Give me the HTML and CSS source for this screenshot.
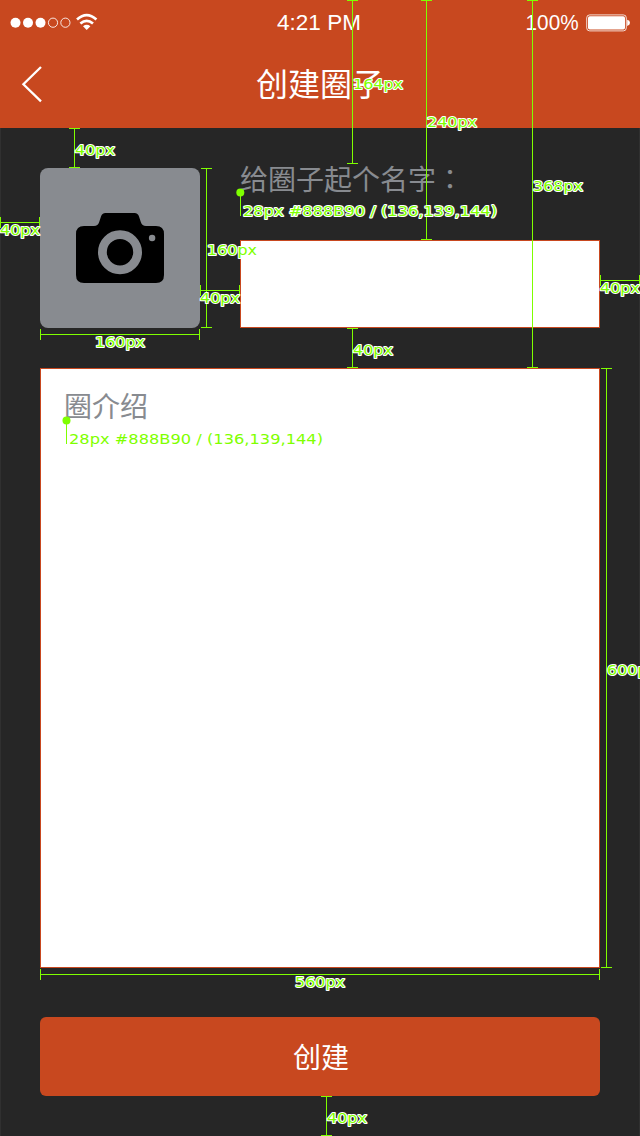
FILE: index.html
```html
<!DOCTYPE html>
<html lang="zh-CN">
<head>
<meta charset="utf-8">
<title>创建圈子</title>
<link rel="stylesheet" href="styles.css">
</head>
<body>
<div class="screen">
  <header class="header">
    <div class="status">
      <div class="signal">
        <svg width="90" height="20" viewBox="0 0 90 20">
          <g fill="#fff"><circle cx="5.5" cy="9.7" r="5"/><circle cx="18" cy="9.7" r="5"/><circle cx="30.5" cy="9.7" r="5"/></g>
          <g fill="none" stroke="#fff" stroke-opacity=".85"><circle cx="43" cy="9.7" r="4.6"/><circle cx="55.4" cy="9.7" r="4.6"/></g>
          <g fill="none" stroke="#fff" stroke-width="2.7"><path d="M67 6.4Q76.7 -2.2 86.4 6.4"/><path d="M70.4 10.5Q76.7 5.1 83 10.5"/></g>
          <path d="M73 13.2Q76.7 10.3 80.4 13.2L76.7 17Z" fill="#fff"/>
        </svg>
      </div>
      <span class="time">4:21 PM</span>
      <div class="power">
        <span class="percent">100%</span>
        <svg width="44" height="18" viewBox="0 0 44 18">
          <rect x=".7" y=".9" width="39.6" height="16" rx="3" fill="none" stroke="#fff" stroke-opacity=".8"/>
          <rect x="2" y="2.2" width="37" height="13.4" rx="1.8" fill="#fff"/>
          <path d="M41.2 5.8Q44 6.5 44 8.8T41.2 11.9Z" fill="#fff"/>
        </svg>
      </div>
    </div>
    <div class="navbar">
      <svg class="back" width="24" height="40" viewBox="0 0 24 40"><path d="M21 3L3.4 20.2L21 37.4" fill="none" stroke="#fff" stroke-width="2.3"/></svg>
      <h1 class="title">创建圈子</h1>
    </div>
  </header>
  <main class="form">
    <div class="top-row">
      <div class="photo">
        <svg width="88" height="70" viewBox="0 0 88 70">
          <path d="M8 13H18Q22 13 23.2 9L25 3.5Q26 0 29.5 0H58.5Q62 0 63 3.5L64.8 9Q66 13 70 13H80Q88 13 88 21V62Q88 70 80 70H8Q0 70 0 62V21Q0 13 8 13Z"/>
          <circle cx="44" cy="39.2" r="17.6" fill="none" stroke="#888b90" stroke-width="8.8"/>
          <circle cx="76.1" cy="25" r="3.2" fill="#888b90"/>
        </svg>
      </div>
      <div class="field">
        <label class="label">给圈子起个名字<span class="colon" lang="zh-TW">：</span></label>
        <div class="name-box"></div>
      </div>
    </div>
    <div class="intro-box">圈介绍</div>
    <div class="submit">创建</div>
  </main>
  <svg class="specs" width="640" height="1136" viewBox="0 0 640 1136">
    <g class="rules">
      <path d="M347 .5H358M352.5 0V164M347 163.5H358"/>
      <path d="M421 .5H432M426.5 0V240M421 239.5H432"/>
      <path d="M527 .5H538M532.5 0V368M527 367.5H538"/>
      <path d="M69 128.5H80M74.5 128V168M69 167.5H80"/>
      <path d="M.5 217V228M0 222.5H40M39.5 217V228"/>
      <path d="M201 168.5H212M206.5 168V328M201 327.5H212"/>
      <path d="M40.5 329V340M40 334.5H200M199.5 329V340"/>
      <path d="M200.5 285V296M200 290.5H240M239.5 285V296"/>
      <path d="M600.5 275V286M600 280.5H640M639.5 275V286"/>
      <path d="M347 328.5H358M352.5 328V368M347 367.5H358"/>
      <path d="M601 368.5H612M606.5 368V968M601 967.5H612"/>
      <path d="M40.5 969V980M40 974.5H600M599.5 969V980"/>
      <path d="M321 1096.5H332M326.5 1096V1136M321 1135.5H332"/>
      <path d="M240.5 192V216M66.5 420V444"/>
    </g>
    <circle cx="240.3" cy="192.5" r="4" fill="#7fff00"/>
    <circle cx="66.5" cy="420.5" r="4" fill="#7fff00"/>
    <g class="notes">
      <text x="353" y="89" textLength="50" lengthAdjust="spacingAndGlyphs">164px</text>
      <text x="427" y="127" textLength="50" lengthAdjust="spacingAndGlyphs">240px</text>
      <text x="533" y="191" textLength="50" lengthAdjust="spacingAndGlyphs">368px</text>
      <text x="75" y="155" textLength="40" lengthAdjust="spacingAndGlyphs">40px</text>
      <text x="0" y="235" textLength="40" lengthAdjust="spacingAndGlyphs">40px</text>
      <text x="207" y="255" textLength="50" lengthAdjust="spacingAndGlyphs">160px</text>
      <text x="95" y="347" textLength="50" lengthAdjust="spacingAndGlyphs">160px</text>
      <text x="200" y="303" textLength="40" lengthAdjust="spacingAndGlyphs">40px</text>
      <text x="600" y="293" textLength="40" lengthAdjust="spacingAndGlyphs">40px</text>
      <text x="353" y="355" textLength="40" lengthAdjust="spacingAndGlyphs">40px</text>
      <text x="607" y="675" textLength="50" lengthAdjust="spacingAndGlyphs">600px</text>
      <text x="295" y="987" textLength="50" lengthAdjust="spacingAndGlyphs">560px</text>
      <text x="327" y="1123" textLength="40" lengthAdjust="spacingAndGlyphs">40px</text>
      <text x="243" y="216" textLength="254" lengthAdjust="spacingAndGlyphs">28px #888B90 / (136,139,144)</text>
      <text x="69" y="444" textLength="254" lengthAdjust="spacingAndGlyphs">28px #888B90 / (136,139,144)</text>
    </g>
  </svg>
</div>
</body>
</html>
```
FILE: styles.css
```css
* { box-sizing: border-box; }
body { margin: 0; background: #262626; }
svg { display: block; }
.screen {
  position: relative;
  width: 640px;
  height: 1136px;
  overflow: hidden;
  background: #262626;
  box-shadow: inset 1px 0 #303030, inset -1px 0 #303030;
  font-family: "Noto Sans CJK SC", sans-serif;
  font-weight: 400;
}
.header { height: 128px; background: #c8481f; color: #fff; }
.status {
  display: grid;
  grid-template-columns: 1fr auto 1fr;
  align-items: center;
  height: 46px;
  padding: 0 10px;
  font: 400 22.5px/46px "Liberation Sans", Arial, sans-serif;
}
.time { margin-left: -2px; }
.power { display: flex; justify-content: flex-end; align-items: center; gap: 7px; }
.percent { transform: scaleX(.92); transform-origin: right; }
.navbar { display: grid; grid-template-columns: 80px 1fr 80px; align-items: center; height: 76px; }
.back { margin-left: 20px; }
.title { margin: 0; text-align: center; font-size: 32px; line-height: 72px; height: 76px; font-weight: 400; }
.form { padding: 40px 40px 0; }
.top-row { display: flex; gap: 40px; height: 160px; }
.photo {
  display: flex;
  align-items: center;
  justify-content: center;
  width: 160px;
  height: 160px;
  border-radius: 8px;
  background: #888b90;
}
.field { flex: 1; display: flex; flex-direction: column; justify-content: space-between; }
.label { height: 24px; font-size: 28px; line-height: 20px; color: #888b90; }
.colon { font-family: "Noto Sans CJK TC", sans-serif; }
.name-box { height: 88px; background: #fff; border: 1px solid #c8481f; }
.intro-box {
  height: 600px;
  margin-top: 40px;
  padding: 16px 23px;
  border: 1px solid #c8481f;
  background: #fff;
  color: #888b90;
  font-size: 28px;
  line-height: 40px;
}
.submit {
  height: 79px;
  margin-top: 49px;
  padding-left: 2px;
  border-radius: 6px;
  background: #c8481f;
  color: #fff;
  text-align: center;
  font-size: 28px;
  line-height: 79px;
}
.specs { position: absolute; left: 0; top: 0; }
.rules { fill: none; stroke: #7fff00; shape-rendering: crispEdges; }
.notes {
  fill: #7fff00;
  stroke: #fff;
  stroke-width: 2px;
  stroke-linejoin: round;
  paint-order: stroke;
  font: 400 14px "DejaVu Sans", Verdana, sans-serif;
}
```
